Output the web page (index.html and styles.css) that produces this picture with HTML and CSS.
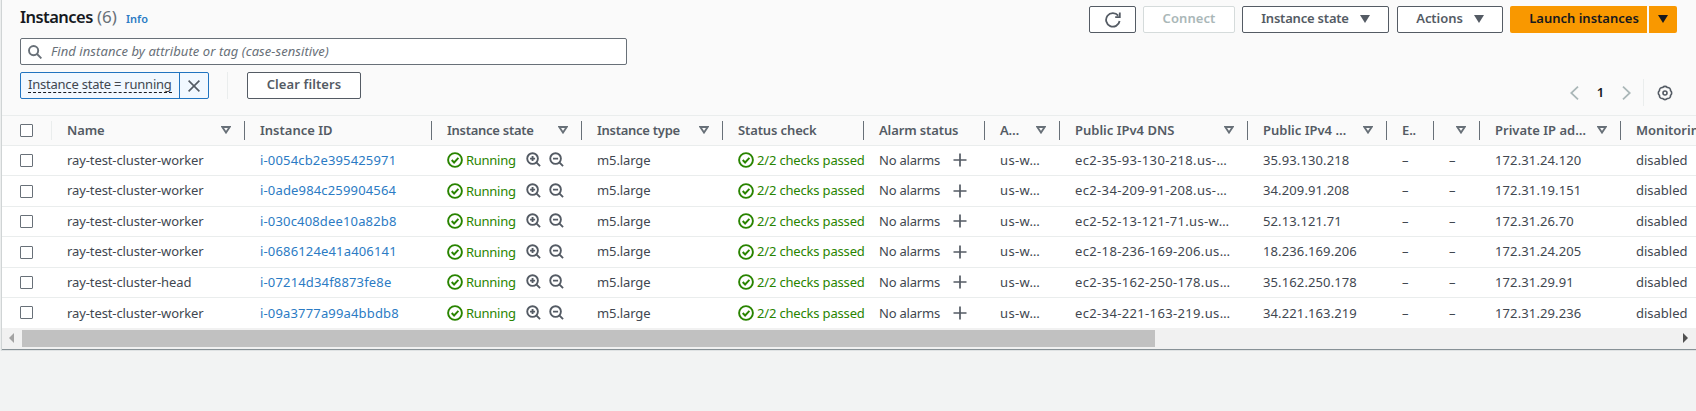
FILE: index.html
```html
<!DOCTYPE html>
<html lang="en">
<head>
<meta charset="utf-8">
<title>Instances</title>
<link rel="stylesheet" href="styles.css">
</head>
<body>
<svg class="defs" aria-hidden="true">
  <symbol id="ok" viewBox="0 0 16 16"><circle cx="8" cy="8" r="6.9"/><path d="M4.7 8l2.4 2.5 4.3-4.6"/></symbol>
  <symbol id="zin" viewBox="0 0 16 16"><circle cx="7" cy="7" r="5.7"/><path d="M11 11l4 4M7 4.3v5.4M4.3 7h5.4"/></symbol>
  <symbol id="zout" viewBox="0 0 16 16"><circle cx="7" cy="7" r="5.7"/><path d="M11 11l4 4M4.3 7h5.4"/></symbol>
  <symbol id="plus" viewBox="0 0 14 14"><path d="M7 .5v13M.5 7h13"/></symbol>
  <symbol id="sort" viewBox="0 0 10 8"><path d="M1.3 1h7.4L5 6.6z"/></symbol>
  <symbol id="caret" viewBox="0 0 10 8"><path d="M0 0h10L5 8z"/></symbol>
</svg>
<main class="panel">
  <header class="top">
    <div class="title-row">
      <h1 class="title"><span class="title-name">Instances</span><span class="count">(6)</span><a class="info">Info</a></h1>
      <div class="actions">
        <button class="btn btn-refresh"><svg class="refresh" viewBox="0 0 16 16"><path d="M14.6 9A6.8 6.8 0 1 1 13.2 3.6M14.8 .6v4.6h-4.6"/></svg></button>
        <button class="btn btn-connect">Connect</button>
        <button class="btn btn-state">Instance state<svg class="caret"><use href="#caret"/></svg></button>
        <button class="btn btn-actions">Actions<svg class="caret"><use href="#caret"/></svg></button>
        <button class="btn launch">Launch instances</button>
        <button class="btn launch-more"><svg class="caret"><use href="#caret"/></svg></button>
      </div>
    </div>
    <div class="search"><svg class="lens" viewBox="0 0 14 14"><circle cx="5.6" cy="5.6" r="4.6"/><path d="M9 9l4.4 4.4"/></svg><span class="placeholder">Find instance by attribute or tag (case-sensitive)</span></div>
    <div class="filters">
      <div class="token"><span class="token-label"><span class="token-text">Instance state = running</span></span><span class="token-x"><svg viewBox="0 0 12 12"><path d="M.6.6l10.8 10.8M11.4.6L.6 11.4"/></svg></span></div>
      <i class="rule"></i>
      <button class="btn clear">Clear filters</button>
      <div class="pager">
        <svg class="chev" viewBox="0 0 9 14"><path d="M8 .7L1.2 7 8 13.3"/></svg>
        <span class="page">1</span>
        <svg class="chev" viewBox="0 0 9 14"><path d="M1 .7L7.8 7 1 13.3"/></svg>
        <i class="rule"></i>
        <svg class="gear" viewBox="-8 -8 16 16"><path d="M-2.3-5.54A2.9 2.9 0 0 1 2.3-5.54A2.9 2.9 0 0 1 5.54-2.3A2.9 2.9 0 0 1 5.54 2.3A2.9 2.9 0 0 1 2.3 5.54A2.9 2.9 0 0 1-2.3 5.54A2.9 2.9 0 0 1-5.54 2.3A2.9 2.9 0 0 1-5.54-2.3A2.9 2.9 0 0 1-2.3-5.54z"/><circle r="2"/></svg>
      </div>
    </div>
  </header>
  <section class="table">
    <div class="row head">
      <div class="c pick"><i class="box"></i></div>
      <div class="c"><span class="h">Name</span><svg class="sort"><use href="#sort"/></svg></div>
      <div class="c"><span class="h wide">Instance ID</span></div>
      <div class="c"><span class="h tight">Instance state</span><svg class="sort"><use href="#sort"/></svg></div>
      <div class="c"><span class="h tight">Instance type</span><svg class="sort"><use href="#sort"/></svg></div>
      <div class="c"><span class="h">Status check</span></div>
      <div class="c"><span class="h">Alarm status</span></div>
      <div class="c"><span class="h">A…</span><svg class="sort"><use href="#sort"/></svg></div>
      <div class="c"><span class="h wide">Public IPv4 DNS</span><svg class="sort"><use href="#sort"/></svg></div>
      <div class="c"><span class="h wide">Public IPv4 …</span><svg class="sort"><use href="#sort"/></svg></div>
      <div class="c"><span class="h">E..</span></div>
      <div class="c"><svg class="sort"><use href="#sort"/></svg></div>
      <div class="c"><span class="h wide">Private IP ad…</span><svg class="sort"><use href="#sort"/></svg></div>
      <div class="c"><span class="h wide">Monitoring</span></div>
    </div>
    <div class="row">
      <div class="c pick"><i class="box"></i></div><div class="c name">ray-test-cluster-worker</div><div class="c"><a class="id">i-0054cb2e395425971</a></div>
      <div class="c state"><svg class="ok"><use href="#ok"/></svg><span class="run">Running</span><svg class="zoom"><use href="#zin"/></svg><svg class="zoom"><use href="#zout"/></svg></div>
      <div class="c name">m5.large</div><div class="c state"><svg class="ok"><use href="#ok"/></svg><span class="chk">2/2 checks passed</span></div>
      <div class="c"><span class="alarm">No alarms</span><svg class="plus"><use href="#plus"/></svg></div><div class="c dns">us-w…</div><div class="c dns">ec2-35-93-130-218.us-…</div><div class="c ip">35.93.130.218</div><div class="c">–</div><div class="c">–</div><div class="c ip">172.31.24.120</div><div class="c">disabled</div>
    </div>
    <div class="row tall">
      <div class="c pick"><i class="box"></i></div><div class="c name">ray-test-cluster-worker</div><div class="c"><a class="id">i-0ade984c259904564</a></div>
      <div class="c state"><svg class="ok"><use href="#ok"/></svg><span class="run">Running</span><svg class="zoom"><use href="#zin"/></svg><svg class="zoom"><use href="#zout"/></svg></div>
      <div class="c name">m5.large</div><div class="c state"><svg class="ok"><use href="#ok"/></svg><span class="chk">2/2 checks passed</span></div>
      <div class="c"><span class="alarm">No alarms</span><svg class="plus"><use href="#plus"/></svg></div><div class="c dns">us-w…</div><div class="c dns">ec2-34-209-91-208.us-…</div><div class="c ip">34.209.91.208</div><div class="c">–</div><div class="c">–</div><div class="c ip">172.31.19.151</div><div class="c">disabled</div>
    </div>
    <div class="row">
      <div class="c pick"><i class="box"></i></div><div class="c name">ray-test-cluster-worker</div><div class="c"><a class="id">i-030c408dee10a82b8</a></div>
      <div class="c state"><svg class="ok"><use href="#ok"/></svg><span class="run">Running</span><svg class="zoom"><use href="#zin"/></svg><svg class="zoom"><use href="#zout"/></svg></div>
      <div class="c name">m5.large</div><div class="c state"><svg class="ok"><use href="#ok"/></svg><span class="chk">2/2 checks passed</span></div>
      <div class="c"><span class="alarm">No alarms</span><svg class="plus"><use href="#plus"/></svg></div><div class="c dns">us-w…</div><div class="c dns">ec2-52-13-121-71.us-w…</div><div class="c ip">52.13.121.71</div><div class="c">–</div><div class="c">–</div><div class="c ip">172.31.26.70</div><div class="c">disabled</div>
    </div>
    <div class="row tall">
      <div class="c pick"><i class="box"></i></div><div class="c name">ray-test-cluster-worker</div><div class="c"><a class="id">i-0686124e41a406141</a></div>
      <div class="c state"><svg class="ok"><use href="#ok"/></svg><span class="run">Running</span><svg class="zoom"><use href="#zin"/></svg><svg class="zoom"><use href="#zout"/></svg></div>
      <div class="c name">m5.large</div><div class="c state"><svg class="ok"><use href="#ok"/></svg><span class="chk">2/2 checks passed</span></div>
      <div class="c"><span class="alarm">No alarms</span><svg class="plus"><use href="#plus"/></svg></div><div class="c dns">us-w…</div><div class="c dns">ec2-18-236-169-206.us…</div><div class="c ip">18.236.169.206</div><div class="c">–</div><div class="c">–</div><div class="c ip">172.31.24.205</div><div class="c">disabled</div>
    </div>
    <div class="row">
      <div class="c pick"><i class="box"></i></div><div class="c name">ray-test-cluster-head</div><div class="c"><a class="id">i-07214d34f8873fe8e</a></div>
      <div class="c state"><svg class="ok"><use href="#ok"/></svg><span class="run">Running</span><svg class="zoom"><use href="#zin"/></svg><svg class="zoom"><use href="#zout"/></svg></div>
      <div class="c name">m5.large</div><div class="c state"><svg class="ok"><use href="#ok"/></svg><span class="chk">2/2 checks passed</span></div>
      <div class="c"><span class="alarm">No alarms</span><svg class="plus"><use href="#plus"/></svg></div><div class="c dns">us-w…</div><div class="c dns">ec2-35-162-250-178.us…</div><div class="c ip">35.162.250.178</div><div class="c">–</div><div class="c">–</div><div class="c ip">172.31.29.91</div><div class="c">disabled</div>
    </div>
    <div class="row last">
      <div class="c pick"><i class="box"></i></div><div class="c name">ray-test-cluster-worker</div><div class="c"><a class="id">i-09a3777a99a4bbdb8</a></div>
      <div class="c state"><svg class="ok"><use href="#ok"/></svg><span class="run">Running</span><svg class="zoom"><use href="#zin"/></svg><svg class="zoom"><use href="#zout"/></svg></div>
      <div class="c name">m5.large</div><div class="c state"><svg class="ok"><use href="#ok"/></svg><span class="chk">2/2 checks passed</span></div>
      <div class="c"><span class="alarm">No alarms</span><svg class="plus"><use href="#plus"/></svg></div><div class="c dns">us-w…</div><div class="c dns">ec2-34-221-163-219.us…</div><div class="c ip">34.221.163.219</div><div class="c">–</div><div class="c">–</div><div class="c ip">172.31.29.236</div><div class="c">disabled</div>
    </div>
  </section>
  <div class="scrollbar"><i class="arrow left"></i><i class="thumb"></i><i class="arrow right"></i></div>
</main>
</body>
</html>
```
FILE: styles.css
```css
* { box-sizing: border-box; }
body { margin: 0; height: 411px; overflow: hidden; background: #f2f3f3; font: 13px/20px "Noto Sans", sans-serif; color: #414750; }
svg { flex: none; fill: none; stroke: #545b64; }
.defs { position: absolute; width: 0; height: 0; }
.panel { height: 351px; margin-left: 1px; border-left: 1px solid #d0d4d5; border-bottom: 1px solid #dfe2e3; background: #fafafa; overflow: hidden; box-shadow: -1px 0 0 #eceeee; }
.top { height: 116px; padding: 6px 19px 0 18px; border-bottom: 1px solid #eaeded; }
.title-row { display: flex; justify-content: space-between; height: 32px; }
.title { display: flex; align-items: baseline; margin: 0; font-size: 17px; line-height: 22px; color: #16191f; }
.title-name { width: 77px; font-size: 16.5px; font-weight: 600; letter-spacing: -.55px; }
.count { width: 28px; font-weight: 400; color: #687078; }
.info { margin-left: 1px; font-size: 11px; font-weight: 600; color: #2b7bc4; }
.actions { display: flex; }
.btn { display: flex; align-items: center; justify-content: center; height: 27px; padding: 0 0 4px; border: 1px solid #545b64; border-radius: 2px; background: #fff; font: 600 13px/20px "Noto Sans", sans-serif; letter-spacing: .1px; color: #545b64; white-space: nowrap; }
.btn-refresh { width: 47px; margin-right: 7px; padding: 0; }
.refresh { width: 16px; height: 16px; stroke-width: 1.8; }
.btn-connect { width: 92px; margin-right: 7px; border-color: #d5dbdb; color: #aab7b8; }
.btn-state { width: 147px; margin-right: 8px; letter-spacing: -.2px; }
.btn-actions { width: 106px; margin-right: 7px; letter-spacing: -.05px; }
.caret { width: 10px; height: 8px; margin: 3px 0 0 11px; fill: #545b64; stroke: none; }
.launch { width: 137px; margin-right: 2px; padding-left: 11px; border: 0; background: #f99800; border-radius: 2px 0 0 2px; letter-spacing: 0; color: #16191f; }
.launch-more { width: 28px; border: 0; background: #f99800; border-radius: 0 2px 2px 0; }
.launch-more .caret { margin-left: 0; fill: #16191f; }
.search { display: flex; align-items: center; width: 607px; height: 27px; padding-left: 7px; border: 1px solid #687078; border-radius: 2px; background: #fff; }
.lens { width: 14px; height: 14px; margin-right: 9px; stroke: #687078; stroke-width: 1.9; }
.placeholder { padding-bottom: 2px; font-style: italic; letter-spacing: .07px; color: #687078; }
.filters { display: flex; height: 34px; margin-top: 7px; }
.token { display: flex; width: 189px; height: 27px; border: 1px solid #2074c0; border-radius: 2px; background: #f1f8ff; }
.token-label { width: 159px; padding: 1px 0 0 7px; border-right: 1px solid #2074c0; }
.token-text { display: block; width: 144px; height: 19px; border-bottom: 1px dashed #16191f; letter-spacing: -.22px; white-space: nowrap; }
.token-x { display: flex; align-items: center; justify-content: center; flex: 1; }
.token-x svg { width: 12px; height: 12px; stroke-width: 1.6; }
.rule { width: 1px; height: 27px; margin-left: 18px; background: #eaeded; }
.clear { width: 114px; margin-left: 19px; }
.pager { display: flex; align-items: center; height: 27px; margin: 7px 4px 0 auto; }
.chev { width: 9px; height: 14px; stroke: #aab7b8; stroke-width: 1.8; }
.page { width: 43px; padding-bottom: 1px; text-align: center; font-weight: 600; color: #16191f; }
.pager .rule { margin: 0 13px 0 12px; }
.gear { width: 16px; height: 16px; stroke-width: 1.6; }
.table { background: #fff; }
.row { display: grid; grid-template-columns: 50px 193px 187px 150px 141px 141px 121px 75px 188px 139px 47px 46px 141px 140px; height: 30px; border-bottom: 1px solid #eaeded; }
.row.tall { height: 31px; }
.row.last { border-bottom: 0; }
.c { display: flex; align-items: center; min-width: 0; padding: 0 0 2px 15px; white-space: nowrap; }
.row.last .c { padding-bottom: 1px; }
.c.pick { padding: 0 0 0 18px; }
.box { width: 13px; height: 13px; border: 1px solid #687078; border-radius: 1px; background: #fff; }
.head { background: #fafafa; font-weight: 600; letter-spacing: -.12px; color: #545b64; }
.head .c { justify-content: space-between; height: 19px; margin-top: 5px; padding-right: 12px; border-right: 1px solid #687078; }
.head .pick { border-color: #eaeded; }
.tight { letter-spacing: -.27px; }
.wide { letter-spacing: 0; }
.name { letter-spacing: -.1px; }
.dns { letter-spacing: .35px; }
.ip { letter-spacing: .12px; }
.sort { width: 10px; height: 8px; margin: 1px 1px 0 auto; stroke: #687078; stroke-width: 1.8; }
.id { letter-spacing: .16px; color: #2b7bc4; }
.state { color: #298400; }
.ok { width: 16px; height: 16px; margin: 1px 3px 0 0; stroke: #298400; stroke-width: 1.9; }
.run { width: 60px; padding-top: 1px; letter-spacing: -.27px; }
.chk { letter-spacing: -.17px; }
.zoom { width: 15px; height: 15px; margin-right: 8px; stroke-width: 2; }
.alarm { width: 74px; letter-spacing: -.2px; }
.plus { width: 14px; height: 14px; margin-top: 1px; stroke-width: 1.7; }
.scrollbar { display: flex; align-items: center; height: 22px; padding: 0 8px 1px 7px; border-bottom: 1px solid #879196; background: #f1f1f1; }
.arrow { border: 5px solid transparent; }
.left { border-left: 0; border-right-color: #a3a3a3; }
.right { margin-left: auto; border-right: 0; border-left-color: #505050; }
.thumb { width: 1133px; height: 17px; margin-left: 8px; background: #c1c1c1; }
```
